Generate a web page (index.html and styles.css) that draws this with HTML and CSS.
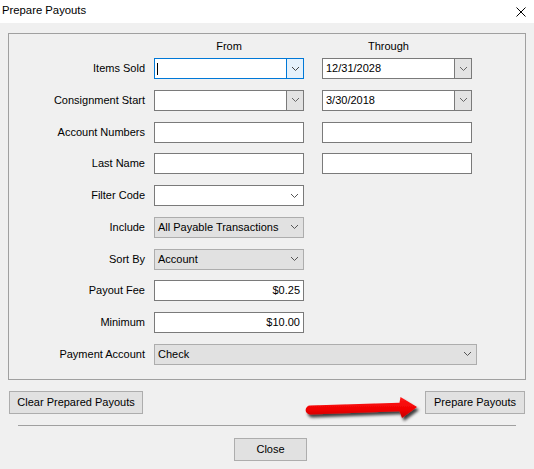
FILE: index.html
```html
<!DOCTYPE html>
<html>
<head>
<meta charset="utf-8">
<link rel="stylesheet" href="styles.css">
</head>
<body>
<div class="window">
  <div class="titlebar">
    <span class="title">Prepare Payouts</span>
    <svg class="close-x" width="10" height="10" viewBox="0 0 10 10"><path d="M0.5 0.5 L9.5 9.5 M9.5 0.5 L0.5 9.5" stroke="#000" stroke-width="1" fill="none"/></svg>
  </div>

  <div class="group">
    <div class="heads">
      <div></div>
      <div class="head-from">From</div>
      <div class="head-through">Through</div>
    </div>
    <div class="form-grid">
      <div class="lbl">Items Sold</div>
      <div class="combo focus"><div class="val"><span class="caret"></span></div><div class="dbtn"><svg width="7" height="4" viewBox="0 0 7 4"><polyline points="0,0 3.5,3.5 7,0" fill="none" stroke="#444" stroke-width="1"/></svg></div></div>
      <div class="combo"><div class="val">12/31/2028</div><div class="dbtn"><svg width="7" height="4" viewBox="0 0 7 4"><polyline points="0,0 3.5,3.5 7,0" fill="none" stroke="#666" stroke-width="1"/></svg></div></div>

      <div class="lbl">Consignment Start</div>
      <div class="combo"><div class="val"></div><div class="dbtn"><svg width="7" height="4" viewBox="0 0 7 4"><polyline points="0,0 3.5,3.5 7,0" fill="none" stroke="#666" stroke-width="1"/></svg></div></div>
      <div class="combo"><div class="val">3/30/2018</div><div class="dbtn"><svg width="7" height="4" viewBox="0 0 7 4"><polyline points="0,0 3.5,3.5 7,0" fill="none" stroke="#666" stroke-width="1"/></svg></div></div>

      <div class="lbl">Account Numbers</div>
      <div class="field"></div>
      <div class="field"></div>

      <div class="lbl">Last Name</div>
      <div class="field"></div>
      <div class="field"></div>

      <div class="lbl">Filter Code</div>
      <div class="select white"><div class="val"></div><div class="chev"><svg width="7" height="4" viewBox="0 0 7 4"><polyline points="0,0 3.5,3.5 7,0" fill="none" stroke="#555" stroke-width="1"/></svg></div></div>
      <div></div>

      <div class="lbl">Include</div>
      <div class="select"><div class="val">All Payable Transactions</div><div class="chev"><svg width="7" height="4" viewBox="0 0 7 4"><polyline points="0,0 3.5,3.5 7,0" fill="none" stroke="#555" stroke-width="1"/></svg></div></div>
      <div></div>

      <div class="lbl">Sort By</div>
      <div class="select"><div class="val">Account</div><div class="chev"><svg width="7" height="4" viewBox="0 0 7 4"><polyline points="0,0 3.5,3.5 7,0" fill="none" stroke="#555" stroke-width="1"/></svg></div></div>
      <div></div>

      <div class="lbl">Payout Fee</div>
      <div class="field money">$0.25</div>
      <div></div>

      <div class="lbl">Minimum</div>
      <div class="field money">$10.00</div>
      <div></div>

      <div class="lbl">Payment Account</div>
      <div class="select wide"><div class="val">Check</div><div class="chev"><svg width="7" height="4" viewBox="0 0 7 4"><polyline points="0,0 3.5,3.5 7,0" fill="none" stroke="#555" stroke-width="1"/></svg></div></div>
    </div>
  </div>

  <div class="actions">
    <button class="wbtn clear">Clear Prepared Payouts</button>
    <button class="wbtn prepare">Prepare Payouts</button>
  </div>

  <svg class="arrow" width="125" height="36" viewBox="0 0 125 36">
    <defs>
      <linearGradient id="rg" x1="0" y1="0" x2="0" y2="1">
        <stop offset="0" stop-color="#ff1a1a"/>
        <stop offset="0.6" stop-color="#f00000"/>
        <stop offset="1" stop-color="#c40000"/>
      </linearGradient>
      <filter id="sh" x="-10%" y="-30%" width="130%" height="180%">
        <feDropShadow dx="2" dy="3" stdDeviation="1.6" flood-color="#000" flood-opacity="0.75"/>
      </filter>
    </defs>
    <path d="M10 15.6 L99.5 12.8 L100.5 7 L117 17 L102 28 L99.5 21.2 L10 24.4 A4.4 4.4 0 0 1 10 15.6 Z" fill="url(#rg)" filter="url(#sh)"/>
  </svg>

  <div class="sep"></div>

  <div class="close-row">
    <button class="wbtn close">Close</button>
  </div>
</div>
</body>
</html>
```

FILE: styles.css
```css
html, body {
  margin: 0;
  padding: 0;
}
body {
  background: #f0f0f0;
  font-family: "Liberation Sans", Arial, sans-serif;
  font-size: 11px;
  color: #000;
}
.window {
  position: relative;
  width: 534px;
  height: 469px;
  overflow: hidden;
  background: #f0f0f0;
}
.titlebar {
  height: 23px;
  background: #fff;
  display: flex;
  align-items: center;
  justify-content: space-between;
  padding: 0 8px 0 2px;
}
.title {
  font-size: 11.3px;
  line-height: 23px;
  margin-top: -2px;
}
.close-x {
  display: block;
  margin-top: 1px;
}
.group {
  margin: 10px 8px 0 8px;
  height: 347px;
  box-sizing: border-box;
  border: 1px solid #a0a0a0;
  padding-top: 6px;
}
.heads,
.form-grid {
  display: grid;
  grid-template-columns: 145px 168px 150px;
}
.heads {
  height: 13px;
  line-height: 13px;
  margin-bottom: 5px;
}
.head-from {
  width: 150px;
  text-align: center;
}
.head-through {
  padding-left: 46px;
}
.form-grid {
  grid-auto-rows: 21px;
  row-gap: 10.78px;
  align-items: center;
}
.lbl {
  text-align: right;
  padding-right: 9px;
  line-height: 21px;
  white-space: nowrap;
}
.combo,
.field,
.select {
  box-sizing: border-box;
  width: 150px;
  height: 21px;
  display: flex;
  align-items: stretch;
  line-height: 19px;
  white-space: nowrap;
}
.combo {
  border: 1px solid #7a7a7a;
  background: #fff;
}
.combo .val {
  flex: 1;
  padding-left: 3px;
  display: flex;
  align-items: center;
}
.dbtn {
  width: 17px;
  box-sizing: border-box;
  border-left: 1px solid #7a7a7a;
  background: #e3e3e3;
  display: flex;
  align-items: center;
  justify-content: center;
}
.dbtn svg,
.chev svg {
  display: block;
}
.combo.focus {
  border-color: #0078d7;
}
.combo.focus .val {
  padding-left: 2px;
}
.combo.focus .dbtn {
  border-left-color: #0078d7;
  background: #e5f1fb;
}
.caret {
  display: block;
  width: 1px;
  height: 12px;
  background: #000;
}
.field {
  border: 1px solid #7a7a7a;
  background: #fff;
  padding: 0 3px;
}
.field.money {
  justify-content: flex-end;
}
.select {
  border: 1px solid #adadad;
  background: #e1e1e1;
}
.select.white {
  border-color: #7a7a7a;
  background: #fff;
}
.select .val {
  flex: 1;
  padding-left: 3px;
}
.chev {
  width: 16px;
  display: flex;
  align-items: center;
  justify-content: center;
  padding-right: 1px;
}
.select.wide {
  grid-column: 2 / 4;
  width: 323px;
}
.actions {
  display: flex;
  justify-content: space-between;
  padding: 0 9px;
  margin-top: 11px;
}
.wbtn {
  box-sizing: border-box;
  height: 23px;
  border: 1px solid #adadad;
  background: #e1e1e1;
  font-family: "Liberation Sans", Arial, sans-serif;
  font-size: 11px;
  color: #000;
  padding: 0;
  margin: 0;
  line-height: 21px;
}
.wbtn.clear {
  width: 134px;
}
.wbtn.prepare {
  width: 100px;
}
.wbtn.close {
  width: 73px;
}
.arrow {
  position: absolute;
  left: 300px;
  top: 390px;
}
.sep {
  height: 1px;
  background: #a0a0a0;
  margin: 11px 18px 0 18px;
}
.close-row {
  margin-top: 12px;
  padding-left: 234px;
  display: flex;
}
```
